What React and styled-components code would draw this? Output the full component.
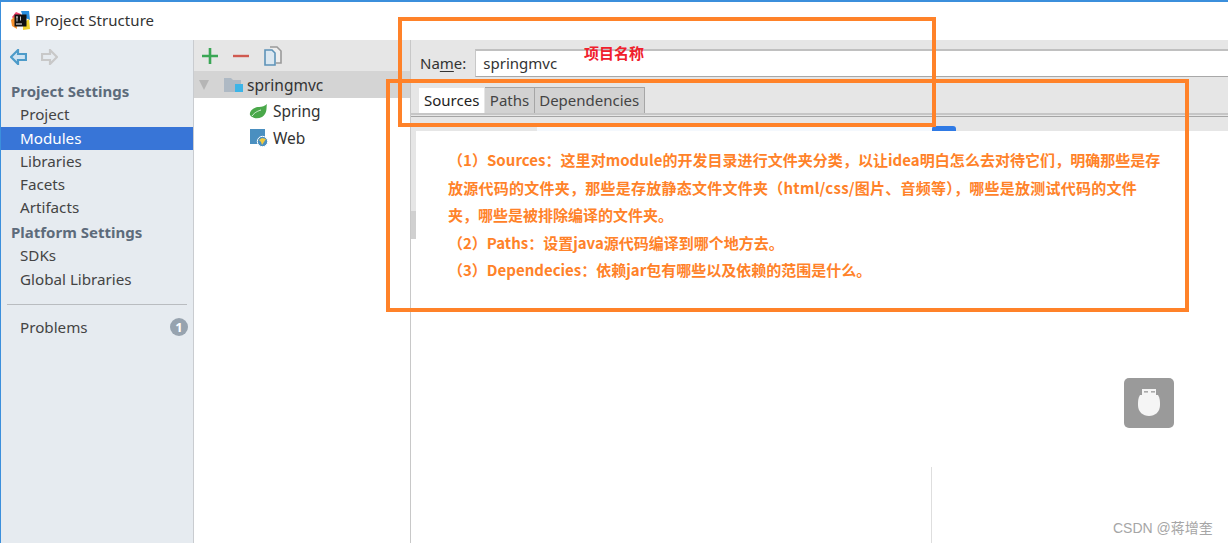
import React from "react";
import styled, { createGlobalStyle } from "styled-components";

const Global = createGlobalStyle`
  html, body { margin: 0; padding: 0; background: #fff; }
  body { font-family: "Noto Sans", "Noto Sans CJK SC", sans-serif; }
  #root { width: 1228px; height: 543px; overflow: hidden; }
`;
const Page = styled.div`
  position: relative; width: 1228px; height: 543px; overflow: hidden; background: #fff;
  display: flex; flex-direction: column; box-sizing: border-box;
  border-top: 2px solid #3b8fdc; border-left: 1px solid #3b8fdc;
`;
const TitleBar = styled.div`
  height: 36px; padding: 0 0 2px 10px; flex: none; display: flex; align-items: center; gap: 5px;
  font-size: 15px; color: #333; letter-spacing: 0.05px;
`;
const Body = styled.div`display: flex; flex: 1; min-height: 0;`;
const Sidebar = styled.nav`
  width: 192px; flex: none; background: #e6ebf0; border-right: 1px solid #c9ccd0;
  display: flex; flex-direction: column; box-sizing: content-box;
`;
const NavTools = styled.div`height: 40.4px; flex: none; box-sizing: border-box; display: flex; align-items: flex-start; gap: 14px; padding: 9px 0 0 9px;`;
const SectionHead = styled.div`
  height: 23px; flex: none; line-height: 23px; padding-left: 10px; font-size: 15px; font-weight: 700; color: #5d6b7b;
  margin-top: ${p => p.$top || 0}px;
`;
const NavItem = styled.div`
  height: 23.2px; flex: none; line-height: 23px; padding-left: 19px; font-size: 15.2px;
  color: ${p => p.$active ? "#fff" : "#444"}; background: ${p => p.$active ? "#3875d7" : "transparent"};
`;
const NavRule = styled.div`height: 1px; flex: none; background: #b9bcc0; margin: 13px 6px 11px 6px;`;
const ProblemRow = styled.div`
  display: flex; flex: none; align-items: center; justify-content: space-between; padding: 0 5px 0 19px;
  height: 23px; font-size: 15.2px; color: #444;
`;
const Badge = styled.span`
  width: 18px; height: 18px; border-radius: 50%; background: #97a3af; color: #fff;
  display: flex; align-items: center; justify-content: center; font-size: 13px; font-weight: 700;
`;
const Tree = styled.section`width: 216px; flex: none; display: flex; flex-direction: column; background: #fff;`;
const TreeTools = styled.div`height: 31px; flex: none; background: #e6e6e6; display: flex; align-items: center; gap: 15px; padding-left: 8px;`;
const TreeRow = styled.div`
  height: ${p => p.$h || 26}px; flex: none; display: flex; align-items: center; gap: ${p => p.$gap || 5}px; font-size: 15.5px; color: #333;
  padding-left: ${p => p.$indent}px; background: ${p => p.$selected ? "#d4d4d4" : "transparent"};
`;
const Arrow = styled.span`
  width: 0; height: 0; border-left: 5px solid transparent; border-right: 5px solid transparent;
  border-top: 10px solid #b5b5b5; margin-right: 11px;
`;
const Detail = styled.section`flex: 1; min-width: 0; display: flex; flex-direction: column; border-left: 1px solid #c8c8c8;`;
const Header = styled.div`height: 91px; flex: none; background: #e6e6e6; display: flex; flex-direction: column;`;
const NameRow = styled.div`height: 37px; flex: none; display: flex; align-items: flex-end; padding-left: 9px; gap: 9px; font-size: 15px; color: #333;`;
const NameLabel = styled.label`line-height: 27px; u { text-underline-offset: 2px; }`;
const NameInput = styled.div`
  flex: 1; height: 28px; box-sizing: border-box; background: #fff; border-top: 2px solid #c0c0c0; border-left: 1px solid #c8c8c8;
  border-bottom: 1px solid #a8a8a8; line-height: 25px; padding-left: 7px; font-size: 15px;
`;
const TabStrip = styled.div`
  display: flex; flex: none; margin-top: 10px; height: 26px; padding-left: 7px; border-bottom: 2px solid #c6c6c6;
`;
const Tab = styled.div`
  height: 26px; line-height: 24px; box-sizing: border-box; padding: 0 ${p => p.$active ? 5 : 4.5}px; font-size: 15px;
  color: ${p => p.$active ? "#222" : "#444"}; background: ${p => p.$active ? "#fff" : "#d2d2d2"};
  border: 1px solid ${p => p.$active ? "#e6e6e6" : "#a6a6a6"}; border-bottom: none;
  ${p => !p.$active && "border-left: none;"}
`;
const StripRule = styled.div`height: 1px; flex: none; margin-top: 1px; background: #a5a5a5;`;
const SelectedPath = styled.div`
  height: 5px; flex: none; margin: 9px 0 0 126px; width: 395px; position: relative; background: #f4f8fd;
  border-top: 1px solid #8db5ea; box-sizing: border-box;
`;
const PathEnd = styled.span`
  position: absolute; right: -24px; top: -1px; width: 24px; height: 5px; background: #2f7ae5; border-radius: 3px 3px 0 0;
`;
const Content = styled.div`flex: 1; display: flex; background: #fff; min-height: 0;`;
const ScrollTrack = styled.div`width: 5px; height: 108px; background: #e6e6e6; display: flex; flex-direction: column; justify-content: flex-end;`;
const ScrollThumb = styled.div`height: 28px; background: #d0d0d0;`;
const Divider = styled.div`position: absolute; left: 930px; top: 465px; width: 1px; height: 76px; background: #dedede;`;
const Frame = styled.div`
  position: absolute; box-sizing: border-box; border: 4px solid #ff8229;
  left: ${p => p.$l}px; top: ${p => p.$t}px; width: ${p => p.$w}px; height: ${p => p.$h}px;
`;
const Tag = styled.div`position: absolute; left: 583px; top: 41px; color: #f0202c; font: 700 15px/20px "Noto Sans CJK SC", sans-serif;`;
const Notes = styled.div`
  position: absolute; left: 447px; top: 144px; width: 730px;
  color: #ff8229; font: 700 15px/27.5px "Noto Sans CJK SC", sans-serif;
`;
const NoteLine = styled.div`white-space: nowrap; letter-spacing: ${p => p.$ls || 0}px;`;
const UsbBadge = styled.div`
  position: absolute; left: 1123px; top: 376px; width: 50px; height: 50px; border-radius: 5px; background: #9a9a9a;
  display: flex; align-items: center; justify-content: center;
`;
const Watermark = styled.div`position: absolute; left: 1112px; top: 516px; color: #a6a6a6; font: 14px/20px "Liberation Sans", "Noto Sans CJK SC", sans-serif;`;

const Logo = () => (
  <svg width="19" height="19" viewBox="0 0 19 19">
    <path d="M1 6 L5 1 L10 3 L6 12 Z" fill="#f0436c" />
    <path d="M0 9 L5 4 L6 18 L1 15 Z" fill="#f7902d" />
    <path d="M10 0 H18 L19 9 L12 6 Z" fill="#2b8fe0" />
    <path d="M12 19 L19 18 L18 8 L12 12 Z" fill="#f0d22a" />
    <rect x="3.5" y="3.5" width="12" height="12" fill="#111" />
    <rect x="5" y="12.5" width="6" height="1" fill="#fff" />
    <rect x="5" y="5.5" width="2" height="1" fill="#ccc" /><rect x="5.5" y="5.5" width="1" height="5" fill="#ccc" />
    <rect x="9" y="5.5" width="1" height="4" fill="#ccc" />
  </svg>
);
const NavArrow = ({ color, fill, flip }) => (
  <svg width="17" height="16" viewBox="0 0 17 16" style={flip ? { transform: "scaleX(-1)" } : undefined}>
    <path d="M8 1 L1 8 L8 15 V11 H16 V5 H8 Z" fill={fill} stroke={color} strokeWidth="2.2" />
  </svg>
);
const Plus = () => (<svg width="16" height="16" viewBox="0 0 16 16"><path d="M8 0v16M0 8h16" stroke="#3aa655" strokeWidth="2.6" /></svg>);
const Minus = () => (<svg width="16" height="16" viewBox="0 0 16 16"><path d="M0 8h16" stroke="#d05a50" strokeWidth="2.4" /></svg>);
const Copy = () => (
  <svg width="18" height="20" viewBox="0 0 18 20">
    <path d="M6 1h7l4 4v12h-5" fill="#eee" stroke="#9a9a9a" strokeWidth="1.6" />
    <path d="M1 4h7l3 3v12H1z" fill="#dbe7f0" stroke="#5d93b8" strokeWidth="1.6" />
  </svg>
);
const Folder = () => (
  <svg width="19" height="15" viewBox="0 0 19 15">
    <path d="M0 1h7l2 2h8v12H0z" fill="#aeb9c4" /><rect x="11" y="7" width="8" height="8" fill="#3cb4e7" />
  </svg>
);
const Leaf = () => (
  <svg width="19" height="15" viewBox="0 0 19 15">
    <path d="M18 0C17 3 19 9 13 13C9 15 4 15 1 11C0 7 5 3 10 3C13 3 16 2 18 0Z" fill="#4aa84a" />
    <path d="M3 12C6 8 9 7 12 6" stroke="#d9f0d9" strokeWidth="1" fill="none" />
  </svg>
);
const WebIcon = () => (
  <svg width="18" height="18" viewBox="0 0 18 18">
    <rect x="0" y="0" width="15" height="15" fill="#4a8fc0" />
    <circle cx="12.5" cy="12.5" r="5.2" fill="#4a8fc0" stroke="#fff" strokeWidth="1" />
    <path d="M9 11l3-2 4 1-2 3-2 3-1-3z" fill="#f0c93e" />
  </svg>
);
const Usb = () => (
  <svg width="24" height="28" viewBox="0 0 24 28">
    <path d="M5 0h14v6H5z" fill="#f5f5f5" />
    <rect x="7" y="2" width="4" height="1.6" fill="#aaa" /><rect x="14" y="2" width="4" height="1.6" fill="#aaa" />
    <path d="M3 6h18c2 3 2 6 2 10c0 7-5 11-11 11S1 23 1 16c0-4 0-7 2-10z" fill="#f5f5f5" />
  </svg>
);

export default function App() {
  return (
    <Page>
      <Global />
      <TitleBar><Logo />Project Structure</TitleBar>
      <Body>
        <Sidebar>
          <NavTools><NavArrow color="#4d9bc9" fill="#cfe3f2" /><NavArrow color="#c8c8c8" fill="#e6ebf0" flip /></NavTools>
          <SectionHead>Project Settings</SectionHead>
          <NavItem>Project</NavItem>
          <NavItem $active>Modules</NavItem>
          <NavItem>Libraries</NavItem>
          <NavItem>Facets</NavItem>
          <NavItem>Artifacts</NavItem>
          <SectionHead $top={2}>Platform Settings</SectionHead>
          <NavItem>SDKs</NavItem>
          <NavItem>Global Libraries</NavItem>
          <NavRule />
          <ProblemRow>Problems<Badge>1</Badge></ProblemRow>
        </Sidebar>
        <Tree>
          <TreeTools><Plus /><Minus /><Copy /></TreeTools>
          <TreeRow $selected $indent={5} $h={27} $gap={4}><Arrow /><Folder />springmvc</TreeRow>
          <TreeRow $indent={55} $h={26}><Leaf />Spring</TreeRow>
          <TreeRow $indent={56} $h={27}><WebIcon />Web</TreeRow>
        </Tree>
        <Detail>
          <Header>
            <NameRow><NameLabel>Na<u>m</u>e:</NameLabel><NameInput>springmvc</NameInput></NameRow>
            <TabStrip>
              <Tab $active>Sources</Tab><Tab>Paths</Tab><Tab>Dependencies</Tab>
            </TabStrip>
            <StripRule />
            <SelectedPath><PathEnd /></SelectedPath>
          </Header>
          <Content><ScrollTrack><ScrollThumb /></ScrollTrack></Content>
        </Detail>
      </Body>
      <Divider />
      <Frame $l={397} $t={15} $w={538} $h={110} />
      <Frame $l={385} $t={77} $w={803} $h={233} />
      <Tag>项目名称</Tag>
      <Notes>
        <NoteLine $ls={0.04}>（1）Sources：这里对module的开发目录进行文件夹分类，以让idea明白怎么去对待它们，明确那些是存</NoteLine>
        <NoteLine $ls={0.25}>放源代码的文件夹，那些是存放静态文件文件夹（html/css/图片、音频等），哪些是放测试代码的文件</NoteLine>
        <NoteLine>夹，哪些是被排除编译的文件夹。</NoteLine>
        <NoteLine>（2）Paths：设置java源代码编译到哪个地方去。</NoteLine>
        <NoteLine>（3）Dependecies：依赖jar包有哪些以及依赖的范围是什么。</NoteLine>
      </Notes>
      <UsbBadge><Usb /></UsbBadge>
      <Watermark>CSDN @蒋增奎</Watermark>
    </Page>
  );
}
